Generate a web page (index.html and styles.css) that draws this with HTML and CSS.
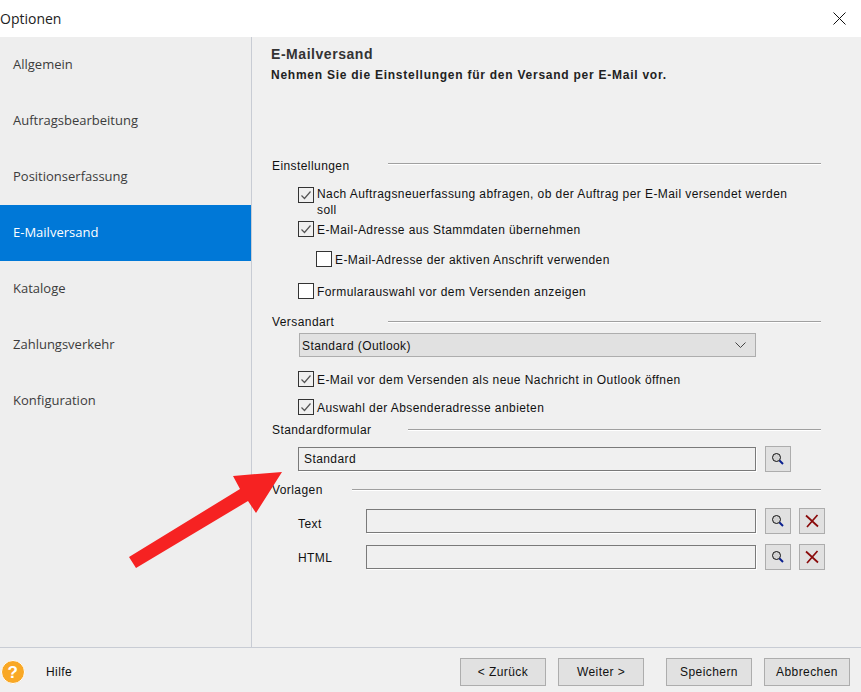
FILE: index.html
```html
<!DOCTYPE html>
<html lang="de">
<head>
<meta charset="utf-8">
<title>Optionen</title>
<link rel="stylesheet" href="styles.css">
</head>
<body>
<div class="window">
  <header class="titlebar">
    <span class="title">Optionen</span>
    <svg class="close" width="13" height="13" viewBox="0 0 13 13"><path d="M.5 .5l12 12M12.5 .5L.5 12.5" stroke="#111" stroke-width="1" fill="none"/></svg>
  </header>
  <div class="body">
    <nav class="sidebar">
      <div class="nav-item">Allgemein</div>
      <div class="nav-item">Auftragsbearbeitung</div>
      <div class="nav-item">Positionserfassung</div>
      <div class="nav-item active">E-Mailversand</div>
      <div class="nav-item">Kataloge</div>
      <div class="nav-item">Zahlungsverkehr</div>
      <div class="nav-item">Konfiguration</div>
    </nav>
    <main class="content">
      <h1 class="heading">E-Mailversand</h1>
      <p class="subheading">Nehmen Sie die Einstellungen für den Versand per E-Mail vor.</p>

      <div class="section-head first"><span>Einstellungen</span><i></i></div>
      <div class="check multi">
        <span class="box on"><svg width="14" height="14" viewBox="0 0 14 14"><path d="M2.5 7.5l3 3 6-7" stroke="#555" stroke-width="1.2" fill="none"/></svg></span>
        <span class="check-label">Nach Auftragsneuerfassung abfragen, ob der Auftrag per E-Mail versendet werden soll</span>
      </div>
      <div class="check gap4">
        <span class="box on"><svg width="14" height="14" viewBox="0 0 14 14"><path d="M2.5 7.5l3 3 6-7" stroke="#555" stroke-width="1.2" fill="none"/></svg></span>
        <span class="check-label">E-Mail-Adresse aus Stammdaten übernehmen</span>
      </div>
      <div class="check nested gap14">
        <span class="box"></span>
        <span class="check-label">E-Mail-Adresse der aktiven Anschrift verwenden</span>
      </div>
      <div class="check gap16">
        <span class="box"></span>
        <span class="check-label">Formularauswahl vor dem Versenden anzeigen</span>
      </div>

      <div class="section-head s2"><span>Versandart</span><i></i></div>
      <div class="select">
        <span class="select-value">Standard (Outlook)</span>
        <svg width="11" height="6" viewBox="0 0 11 6"><path d="M0.5 0.5l5 5 5-5" stroke="#444" fill="none"/></svg>
      </div>
      <div class="check gap14">
        <span class="box on"><svg width="14" height="14" viewBox="0 0 14 14"><path d="M2.5 7.5l3 3 6-7" stroke="#555" stroke-width="1.2" fill="none"/></svg></span>
        <span class="check-label">E-Mail vor dem Versenden als neue Nachricht in Outlook öffnen</span>
      </div>
      <div class="check gap12">
        <span class="box on"><svg width="14" height="14" viewBox="0 0 14 14"><path d="M2.5 7.5l3 3 6-7" stroke="#555" stroke-width="1.2" fill="none"/></svg></span>
        <span class="check-label">Auswahl der Absenderadresse anbieten</span>
      </div>

      <div class="section-head s3"><span>Standardformular</span><i></i></div>
      <div class="field-row r1">
        <div class="input wide">Standard</div>
        <button class="icon-btn"><svg width="16" height="16" viewBox="0 0 16 16"><circle cx="6.5" cy="6.5" r="4" fill="#d2d2d2" stroke="#111" stroke-width="1"/><path d="M9.5 9.5l3.5 3.5" stroke="#0a1f8f" stroke-width="2"/></svg></button>
      </div>

      <div class="section-head s4"><span>Vorlagen</span><i></i></div>
      <div class="field-row r2">
        <label class="field-label text-label">Text</label>
        <div class="input narrow"></div>
        <button class="icon-btn"><svg width="16" height="16" viewBox="0 0 16 16"><circle cx="6.5" cy="6.5" r="4" fill="#d2d2d2" stroke="#111" stroke-width="1"/><path d="M9.5 9.5l3.5 3.5" stroke="#0a1f8f" stroke-width="2"/></svg></button>
        <button class="icon-btn del"><svg width="14" height="14" viewBox="0 0 14 14"><path d="M1 1.5l12 11M12.5 1L2 13" stroke="#8a0a0a" stroke-width="1.7" fill="none"/></svg></button>
      </div>
      <div class="field-row r3">
        <label class="field-label html-label">HTML</label>
        <div class="input narrow"></div>
        <button class="icon-btn"><svg width="16" height="16" viewBox="0 0 16 16"><circle cx="6.5" cy="6.5" r="4" fill="#d2d2d2" stroke="#111" stroke-width="1"/><path d="M9.5 9.5l3.5 3.5" stroke="#0a1f8f" stroke-width="2"/></svg></button>
        <button class="icon-btn del"><svg width="14" height="14" viewBox="0 0 14 14"><path d="M1 1.5l12 11M12.5 1L2 13" stroke="#8a0a0a" stroke-width="1.7" fill="none"/></svg></button>
      </div>
    </main>
  </div>
  <footer class="footer">
    <div class="help">
      <svg width="26" height="26" viewBox="0 0 26 26"><circle cx="13" cy="13" r="11.5" fill="#f9a825" stroke="#fff" stroke-width="1"/><text x="13" y="19" text-anchor="middle" class="help-mark">?</text></svg>
      <span class="help-label">Hilfe</span>
    </div>
    <div class="buttons">
      <button class="btn">&lt; Zurück</button>
      <button class="btn b2">Weiter &gt;</button>
      <button class="btn b3">Speichern</button>
      <button class="btn b4">Abbrechen</button>
    </div>
  </footer>
  <svg class="arrow" width="170" height="110" viewBox="125 465 170 110"><polygon points="129,557 240,489 233,476 282,472 256,513 248,501 136,568" fill="#f62222"/></svg>
</div>
</body>
</html>
```
FILE: styles.css
```css
* { box-sizing: border-box; }
html, body { margin: 0; padding: 0; }
body { width: 861px; height: 692px; overflow: hidden; background: #f0f0f0; font-family: "Open Sans", "Liberation Sans", sans-serif; color: #111; }
.window { position: relative; width: 861px; height: 692px; display: flex; flex-direction: column; }

.titlebar { height: 37px; background: #fff; display: flex; align-items: center; justify-content: space-between; padding-right: 15px; }
.title { font-size: 14px; font-family: "Open Sans", sans-serif; color: #222; margin-top: -1px; }

.body { display: flex; height: 610px; }
.sidebar { width: 252px; border-right: 1px solid #c8ccd4; background: #eeeeee; flex: none; }
.nav-item { height: 56px; display: flex; align-items: center; padding: 0 0 2px 13px; font-size: 13px; color: #3c3c3c; }
.nav-item.active { background: #0078d7; color: #fff; }

.content { flex: 1; padding: 8px 0 0 19px; font-family: "Liberation Sans", sans-serif; font-size: 12px; letter-spacing: .42px; color: #111; }
.heading { margin: 0; font-size: 14px; line-height: 18px; font-weight: bold; color: #333; letter-spacing: .55px; }
.subheading { margin: 4px 0 0; font-size: 12px; line-height: 16px; font-weight: bold; color: #222; letter-spacing: .75px; }

.section-head { display: flex; align-items: center; height: 16px; margin-left: 1px; width: 549px; }
.section-head span { flex: none; white-space: nowrap; width: 116px; padding-top: 2px; }
.section-head i { flex: 1; height: 1px; background: #a0a0a0; box-shadow: 0 1px 0 #fff; }
.section-head.first { margin-top: 74px; }
.section-head.first i { margin-top: -4px; }
.section-head.s2 { margin-top: 14px; }
.section-head.s3 { margin-top: 6px; }
.section-head.s3 span { width: 136px; }
.section-head.s4 { margin-top: 9px; }
.section-head.s4 span { width: 80px; }

.check { display: flex; align-items: flex-start; margin-left: 27px; line-height: 16px; width: 500px; }
.check.multi { margin-top: 12px; }
.check.gap4 { margin-top: 4px; }
.check.gap12 { margin-top: 12px; }
.check.gap14 { margin-top: 14px; }
.check.gap16 { margin-top: 16px; }
.check.nested { margin-left: 45px; }
.check-label { margin: 0 0 -1px 3px; padding-top: 1px; }
.multi .box { margin-top: 2px; }
.box { flex: none; width: 16px; height: 16px; border: 1px solid #333; background: #fff; display: flex; align-items: center; justify-content: center; }
.box.on { background: #f0f0f0; }

.select { margin: 4px 0 0 28px; width: 457px; height: 24px; border: 1px solid #adadad; background: #e1e1e1; display: flex; align-items: center; justify-content: space-between; padding: 0 9px 0 2px; }
.select-value { padding-top: 2px; }

.field-row { display: flex; align-items: center; margin-left: 27px; height: 26px; }
.field-row.r1 { margin-top: 9px; }
.field-row.r2 { margin-top: 11px; }
.field-row.r3 { margin-top: 10px; }
.input { height: 24px; border: 1px solid #7a7a7a; box-shadow: 1px 1px 0 #fff; background: #f0f0f0; display: flex; align-items: center; padding-left: 5px; }
.input.wide { width: 458px; }
.input.narrow { width: 390px; }
.field-label { width: 68px; }
.text-label { padding-top: 5px; }
.html-label { padding-top: 2px; }
.icon-btn { width: 26px; height: 26px; margin-left: 9px; padding: 0; border: 1px solid #adadad; background: #e1e1e1; display: flex; align-items: center; justify-content: center; }
.icon-btn.del { margin-left: 8px; }

.footer { height: 45px; border-top: 1px solid #c8ccd4; padding: 4px 11px 0 0; display: flex; align-items: center; justify-content: space-between; font-family: "Liberation Sans", sans-serif; font-size: 12px; letter-spacing: .42px; }
.help { display: flex; align-items: center; }
.help-mark { font-size: 17px; font-weight: bold; fill: #fff; font-family: "Liberation Sans", sans-serif; }
.help-label { margin-left: 20px; }
.buttons { display: flex; }
.btn { width: 86px; height: 28px; padding: 0; border: 1px solid #adadad; background: #e1e1e1; font: inherit; letter-spacing: .42px; color: #111; }
.b2 { margin-left: 12px; }
.b3 { margin-left: 22px; }
.b4 { margin-left: 12px; }

.arrow { position: absolute; left: 125px; top: 465px; }
```
